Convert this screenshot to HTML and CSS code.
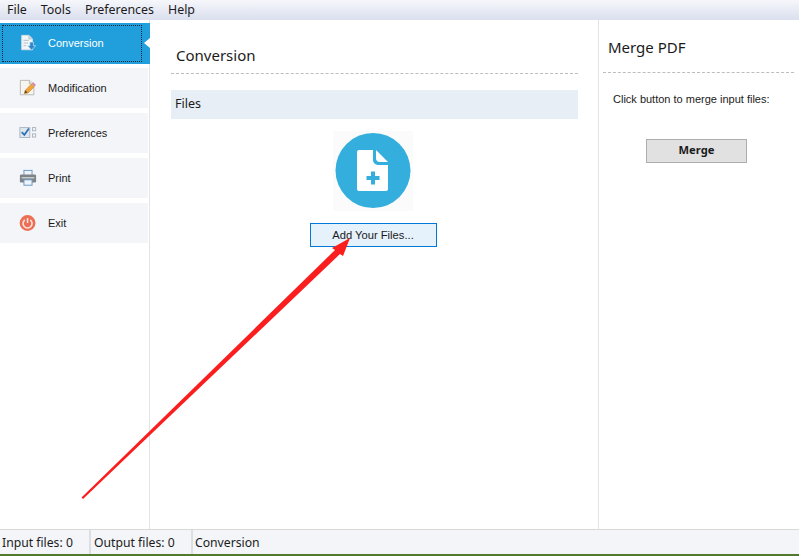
FILE: index.html
```html
<!DOCTYPE html>
<html lang="en">
<head>
    <meta charset="UTF-8">
    <title>PDF Converter</title>
    <link rel="stylesheet" href="styles.css">
</head>
<body>
    <div id="window">
        <nav class="menu-bar">
            <span>File</span>
            <span>Tools</span>
            <span>Preferences</span>
            <span>Help</span>
        </nav>

        <div class="content">
            <aside class="sidebar">
                <div class="side-item active">
                    <svg class="side-icon" width="18" height="18" viewBox="0 0 20 20">
                        <path d="M3 1.500h8l4 4v12H3z" fill="#f4f6f8" stroke="#d5dde3"/>
                        <path d="M11 1.500v4h4" fill="#cfd9e1" stroke="#b8c4ce"/>
                        <path d="M5 7h6M5 10h5M5 13h3" stroke="#a9b9c5"/>
                        <path d="M12 9h4v4h2.500L14 18l-4.500-5H12z" fill="#2f86c8" stroke="#dbeefa" stroke-width=".7"/>
                    </svg>
                    <span>Conversion</span>
                </div>
                <div class="side-item">
                    <svg class="side-icon" width="18" height="18" viewBox="0 0 20 20">
                        <path d="M1.500 1.500h10l5 4v12h-15z" fill="#f6f5ef" stroke="#b4b4b0"/>
                        <path d="M11.500 1.500v4h5" fill="#e4e4de" stroke="#b4b4b0"/>
                        <path d="M6 16l1-3.500 7-7 3 3-7 7z" fill="#f0a63c" stroke="#c97f22" stroke-width=".7"/>
                        <path d="M14.500 5l1.300-1.300 3 3-1.300 1.300z" fill="#d77fb0"/>
                        <path d="M6 16l1-3.500 2.500 2.500z" fill="#5c4a38"/>
                    </svg>
                    <span>Modification</span>
                </div>
                <div class="side-item">
                    <svg class="side-icon" width="18" height="18" viewBox="0 0 20 20">
                        <rect x="1" y="4" width="11" height="11" fill="#dfe7f0" stroke="#a7b2bd"/>
                        <path d="M3 9l3 3 5-7" fill="none" stroke="#2f72b8" stroke-width="2"/>
                        <rect x="15" y="4" width="3.500" height="3.500" fill="#f4f6f8" stroke="#a7b2bd"/>
                        <rect x="15" y="11" width="3.500" height="3.500" fill="#f4f6f8" stroke="#a7b2bd"/>
                    </svg>
                    <span>Preferences</span>
                </div>
                <div class="side-item">
                    <svg class="side-icon" width="18" height="18" viewBox="0 0 20 20">
                        <rect x="5.500" y="1.500" width="9" height="6" fill="#eef4fa" stroke="#5f93c4"/>
                        <rect x="1" y="6" width="18" height="9" rx="1.500" fill="#7f8488"/>
                        <rect x="3" y="9" width="14" height="1.500" fill="#cfd3d6"/>
                        <rect x="5.500" y="12" width="9" height="6" fill="#eef4fa" stroke="#5f93c4"/>
                    </svg>
                    <span>Print</span>
                </div>
                <div class="side-item">
                    <svg class="side-icon" width="18" height="18" viewBox="0 0 20 20">
                        <circle cx="9.500" cy="10" r="8.800" fill="#ec6f55"/>
                        <path d="M6.500 6.500a5 5 0 1 0 6 0" fill="none" stroke="#fbe3dc" stroke-width="1.800"/>
                        <path d="M9.500 4.500v5.500" stroke="#fbe3dc" stroke-width="1.800"/>
                    </svg>
                    <span>Exit</span>
                </div>
            </aside>

            <main class="main-panel">
                <h2 class="panel-title">Conversion</h2>
                <div class="section-head">Files</div>
                <div class="add-area">
                    <svg class="add-icon" width="80" height="80" viewBox="0 0 80 80">
                        <rect width="80" height="80" fill="#fbfbfb"/>
                        <circle cx="40" cy="39.500" r="37.500" fill="#34aedd"/>
                        <path d="M24 21a2 2 0 0 1 2-2h14v10a5 5 0 0 0 5 5h10v24a2 2 0 0 1-2 2H26a2 2 0 0 1-2-2z" fill="#fff"/>
                        <path d="M43 19l12 12h-8a4 4 0 0 1-4-4z" fill="#fff"/>
                        <path d="M38 40.500h4v4.500h4.500v4H42v4.500h-4V49h-4.500v-4H38z" fill="#34aedd"/>
                    </svg>
                    <button class="add-button">Add Your Files...</button>
                </div>
            </main>

            <aside class="merge-panel">
                <h2 class="panel-title merge-title">Merge PDF</h2>
                <p class="merge-text">Click button to merge input files:</p>
                <button class="merge-button">Merge</button>
            </aside>
        </div>

        <footer class="status-bar">
            <span class="status-cell first">Input files: 0</span>
            <span class="status-cell second">Output files: 0</span>
            <span class="status-cell last">Conversion</span>
        </footer>
    </div>

    <svg class="arrow" width="799" height="556" viewBox="0 0 799 556">
        <path d="M81.500 497.500L335 250l-3-2 18-10-7 18-3-2L83 499z" fill="#fb1e1e"/>
    </svg>
</body>
</html>
```

FILE: styles.css
```css
html, body {
    margin: 0;
    padding: 0;
    background-color: #fff;
}

body {
    font-family: "Noto Sans", sans-serif;
    font-size: 12px;
    color: #1b1b1b;
    overflow: hidden;
}

#window {
    width: 799px;
    height: 556px;
    display: flex;
    flex-direction: column;
    border-bottom: 2px solid #4f7a2e;
    box-sizing: border-box;
}

.menu-bar {
    height: 20px;
    display: flex;
    align-items: center;
    gap: 14px;
    padding-left: 7px;
    padding-bottom: 2px;
    box-sizing: border-box;
    font-size: 12.400px;
    background: linear-gradient(#f6f7fb, #dadfee);
}

.content {
    flex: 1;
    display: flex;
    min-height: 0;
}

.sidebar {
    width: 149px;
    border-right: 1px solid #e3e3e3;
    padding-top: 3px;
    display: flex;
    flex-direction: column;
    gap: 5px;
    font-family: "Liberation Sans", sans-serif;
    font-size: 11px;
}

.side-item {
    position: relative;
    height: 40px;
    width: 148px;
    box-sizing: border-box;
    display: flex;
    align-items: center;
    background-color: #f4f5f8;
    padding-left: 19px;
}

.side-item.active {
    background-color: #219fdc;
    color: #fff;
    width: 150px;
    height: 41px;
    padding-bottom: 2px;
    margin-bottom: -1px;
}

.side-item.active::before {
    content: "";
    position: absolute;
    left: 2px;
    top: 2px;
    right: 8px;
    bottom: 2px;
    border: 1px dotted #123;
}

.side-item.active::after {
    content: "";
    position: absolute;
    right: 0;
    top: 15px;
    border: 5px solid transparent;
    border-right: 6px solid #fff;
    border-left-width: 0;
}

.side-icon {
    margin-right: 11px;
}

.main-panel {
    width: 449px;
    border-right: 1px solid #e3e3e3;
    padding: 0 20px 0 21px;
    box-sizing: border-box;
}

.panel-title {
    margin: 0;
    height: 53px;
    line-height: 71px;
    padding-left: 5px;
    font-size: 15px;
    font-weight: normal;
    border-bottom: 1px dashed #bdbdbd;
}

.merge-title {
    height: 52px;
    line-height: 54px;
}

.section-head {
    margin-top: 16px;
    height: 29px;
    line-height: 27px;
    padding-left: 4px;
    background-color: #e8eef6;
    font-size: 12.500px;
}

.add-area {
    display: flex;
    flex-direction: column;
    align-items: center;
    padding: 12px 3px 0 0;
}

.add-icon {
    display: block;
}

.add-button {
    width: 127px;
    height: 24px;
    margin-top: 12px;
    padding: 0;
    font-family: "Liberation Sans", sans-serif;
    font-size: 11.200px;
    color: #1b1b1b;
    background-color: #e5f1fb;
    border: 1px solid #0078d7;
}

.merge-panel {
    flex: 1;
    padding: 0 5px 0 4px;
}

.merge-text {
    margin: 20px 0 0 10px;
    font-family: "Liberation Sans", sans-serif;
    font-size: 11px;
}

.merge-button {
    display: block;
    width: 101px;
    height: 24px;
    margin: 34px 0 0 43px;
    padding: 0 0 3px;
    font-family: inherit;
    font-size: 11.200px;
    font-weight: bold;
    color: #1b1b1b;
    background-color: #e1e1e1;
    border: 1px solid #adadad;
}

.status-bar {
    height: 25px;
    display: flex;
    background-color: #f4f5f8;
    border-top: 1px solid #d9d9d9;
    box-sizing: border-box;
    font-size: 12.200px;
}

.status-cell {
    padding-left: 3px;
    line-height: 26px;
}

.status-cell.first {
    width: 87px;
    padding-left: 2px;
    border-right: 2px solid #dedede;
}

.status-cell.second {
    width: 97px;
    border-right: 2px solid #dedede;
}

.status-cell.last {
    padding-left: 2px;
}

.arrow {
    position: absolute;
    left: 0;
    top: 0;
    pointer-events: none;
}
```
